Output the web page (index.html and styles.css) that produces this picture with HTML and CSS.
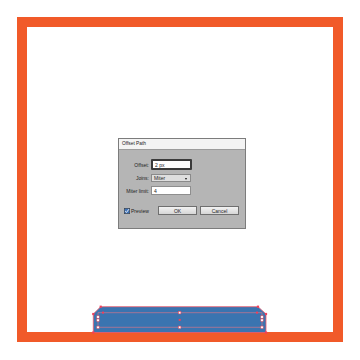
FILE: index.html
```html
<!DOCTYPE html>
<html>
<head>
<meta charset="utf-8">
<link rel="stylesheet" href="styles.css">
</head>
<body>
<div class="page">
  <div class="frame">
    <div class="dialog">
      <div class="titlebar">Offset Path</div>
      <div class="body">
        <div class="form">
          <label class="lbl">Offset:</label>
          <div class="field focus">2 px</div>
          <label class="lbl">Joins:</label>
          <div class="field select">Miter<span class="arrow"></span></div>
          <label class="lbl">Miter limit:</label>
          <div class="field plain">4</div>
        </div>
        <div class="actions">
          <div class="preview">
            <svg class="check" width="6" height="6" viewBox="0 0 6 6">
              <rect x="0.25" y="0.25" width="5.5" height="5.5" fill="#3f73b8" stroke="#333"  stroke-width="0.5"/>
              <path d="M1.2 3.1 L2.5 4.4 L4.9 1.2" fill="none" stroke="#fff" stroke-width="0.9"/>
            </svg>
            <span>Preview</span>
          </div>
          <div class="btn default">OK</div>
          <div class="btn">Cancel</div>
        </div>
      </div>
    </div>
    <svg class="art" width="176" height="28" viewBox="0 0 176 28">
      <path d="M1.3 9 L8.7 1.7 L166 1.7 L174 9 L174 27.5 L1.3 27.5 Z" fill="#3a74b0" stroke="#ee5a6c" stroke-width="0.8"/>
      <path d="M6 7.7 L170 7.7 M6 22.3 L170 22.3 M6 7.7 L6 22.3 M170 7.7 L170 22.3" fill="none" stroke="#e87484" stroke-width="0.6"/>
      <g fill="#fff" stroke="#ee4455" stroke-width="0.5">
        <rect x="4.8" y="10.8" width="2.4" height="2.4"/>
        <rect x="4.8" y="14" width="2.4" height="2.4"/>
        <rect x="4.8" y="21.1" width="2.4" height="2.4"/>
        <rect x="86.5" y="6.5" width="2.4" height="2.4"/>
        <rect x="86.5" y="21.1" width="2.4" height="2.4"/>
        <rect x="168.8" y="10.8" width="2.4" height="2.4"/>
        <rect x="168.8" y="14" width="2.4" height="2.4"/>
        <rect x="168.8" y="21.1" width="2.4" height="2.4"/>
      </g>
      <g fill="#f0405a">
        <rect x="7.6" y="0.6" width="2.2" height="2.2"/>
        <rect x="164.9" y="0.6" width="2.2" height="2.2"/>
        <rect x="0.2" y="7.9" width="2.2" height="2.2"/>
        <rect x="172.9" y="7.9" width="2.2" height="2.2"/>
        <rect x="0.2" y="26.4" width="2.2" height="2.2"/>
        <rect x="172.9" y="26.4" width="2.2" height="2.2"/>
        <rect x="10" y="6.6" width="2" height="2"/>
        <rect x="164" y="6.6" width="2" height="2"/>
        <rect x="86.7" y="13.9" width="2" height="2"/>
      </g>
    </svg>
  </div>
</div>
</body>
</html>
```
FILE: styles.css
```css
html, body {
  margin: 0;
  padding: 0;
  background: #fff;
}
.page {
  width: 360px;
  height: 360px;
  padding: 17px 0 0 17px;
  box-sizing: border-box;
  font-family: "Liberation Sans", Arial, sans-serif;
}
.frame {
  width: 326px;
  height: 325px;
  box-sizing: border-box;
  border: 10px solid #f15a29;
  display: flex;
  flex-direction: column;
}
.dialog {
  margin: 111px 0 0 91px;
  width: 128px;
  height: 91px;
  box-sizing: border-box;
  border: 1px solid #7c7c7c;
  background: #b5b5b5;
  display: flex;
  flex-direction: column;
}
.titlebar {
  height: 10px;
  line-height: 10px;
  background: #f4f4f4;
  border-bottom: 1px solid #9c9c9c;
  font-size: 4.8px;
  color: #222;
  padding-left: 3px;
}
.body {
  padding-top: 9px;
  font-size: 5px;
  color: #1e1e1e;
}
.form {
  display: grid;
  grid-template-columns: 30px 41px;
  column-gap: 2px;
  row-gap: 4px;
  align-items: center;
}
.lbl {
  text-align: right;
  white-space: nowrap;
}
.field {
  box-sizing: border-box;
  background: #fff;
  padding-left: 2px;
  display: flex;
  align-items: center;
  position: relative;
}
.focus {
  height: 11px;
  border: 2px solid #3a3a3a;
  border-radius: 1px;
}
.select {
  width: 40px;
  height: 8px;
  border: 1px solid #8a8a8a;
  background: #dedede;
}
.plain {
  width: 40px;
  height: 9px;
  border: 1px solid #8e8e8e;
}
.arrow {
  position: absolute;
  right: 3px;
  top: 2.5px;
  width: 0;
  height: 0;
  border-left: 1.5px solid transparent;
  border-right: 1.5px solid transparent;
  border-top: 2px solid #111;
}
.actions {
  display: flex;
  align-items: center;
  margin-top: 11px;
  padding-left: 5px;
}
.preview {
  width: 34px;
  display: flex;
  align-items: center;
  gap: 1px;
}
.check {
  display: block;
}
.btn {
  width: 39px;
  height: 9px;
  box-sizing: border-box;
  border: 1px solid #6f6f6f;
  background: linear-gradient(#f2f2f2, #d6d6d6);
  display: flex;
  align-items: center;
  justify-content: center;
  margin-right: 3px;
}
.art {
  display: block;
  margin: auto 0 -1px 65px;
  overflow: visible;
}
```
